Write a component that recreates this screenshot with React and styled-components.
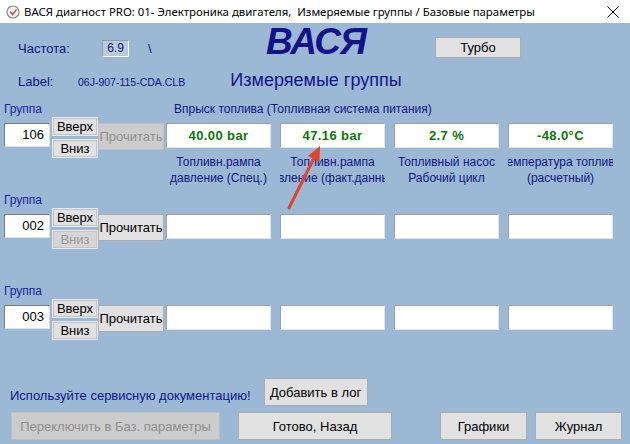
import React from "react";
import styled, { createGlobalStyle } from "styled-components";

const GlobalStyle = createGlobalStyle`
  html, body {
    margin: 0;
    padding: 0;
    overflow: hidden;
  }
  body {
    font-family: "Liberation Sans", Arial, sans-serif;
  }
`;

const Window = styled.div`
  position: relative;
  width: 630px;
  height: 444px;
  display: flex;
  flex-direction: column;
  background: #9bb8d5;
  overflow: hidden;
`;

const TitleBar = styled.div`
  flex: none;
  height: 23px;
  display: flex;
  align-items: center;
  padding-left: 6px;
  background: #fff;
  color: #000;
  font-family: "Noto Sans", "Open Sans", sans-serif;
  font-size: 11.4px;
  white-space: nowrap;
  .title-text {
    margin-left: 4px;
  }
  .close {
    margin-left: auto;
    margin-right: 11px;
    display: flex;
  }
`;

const Body = styled.div`
  flex: 1;
  display: flex;
  flex-direction: column;
  padding: 0 4px 4px 4px;
`;

const Header = styled.div`
  flex: none;
  height: 79px;
  display: flex;
  padding-top: 4px;
  box-sizing: border-box;
`;

const InfoCol = styled.div`
  width: 226px;
  padding-left: 14px;
  padding-top: 13px;
  box-sizing: border-box;
`;

const InfoRow = styled.div`
  display: flex;
  align-items: center;
  height: 17px;
  margin-top: ${(p) => p.$offset || 0}px;
  color: #141484;
  font-size: 13px;
  .key {
    width: ${(p) => p.$keyWidth}px;
  }
  .file {
    font-size: 10.5px;
  }
  .slash {
    margin-left: 19px;
  }
`;

const FreqBox = styled.div`
  width: 27px;
  height: 17px;
  box-sizing: border-box;
  border: 1px solid;
  border-color: #8d9db0 #fff #fff #8d9db0;
  background: #bccadb;
  color: #141484;
  font-size: 12px;
  line-height: 15px;
  text-align: center;
`;

const BrandCol = styled.div`
  width: 172px;
  text-align: center;
  color: #14128a;
  .brand {
    font-size: 37px;
    line-height: 30px;
    font-weight: 700;
    font-style: italic;
    letter-spacing: -1px;
  }
  .subtitle {
    margin-top: 13px;
    font-size: 18px;
    line-height: 20px;
    white-space: nowrap;
  }
`;

const WinButton = styled.button`
  flex: none;
  width: ${(p) => p.$w}px;
  height: ${(p) => p.$h || 28}px;
  margin-left: ${(p) => p.$ml || 0}px;
  margin-top: ${(p) => p.$mt || 0}px;
  padding: 0;
  box-sizing: border-box;
  border: 1px solid #adadad;
  background: #e1e1e1;
  color: #000;
  font-family: "Liberation Sans", Arial, sans-serif;
  font-size: 13px;
  white-space: nowrap;
  &:disabled {
    background: #cccccc;
    border-color: #bfbfbf;
    color: #8f8f8f;
  }
`;

const SmallButton = styled(WinButton)`
  border-color: #e6e9ee;
  box-shadow: inset 0 0 0 1px #c4c4c4;
  &:disabled {
    background: #d6d6d6;
    border-color: #e6e9ee;
    color: #9a9a9a;
  }
`;

const GroupBlock = styled.div`
  flex: none;
  height: 91px;
  display: flex;
  flex-direction: column;
`;

const HeadLine = styled.div`
  display: flex;
  height: 14px;
  font-size: 12px;
  line-height: 14px;
  white-space: nowrap;
  .group {
    width: 170px;
    color: #1c1ca6;
  }
  .section {
    color: #141484;
  }
`;

const MainRow = styled.div`
  display: flex;
  align-items: flex-start;
  margin-top: 1px;
`;

const GroupInput = styled.div`
  width: 46px;
  height: 24px;
  margin-top: 6px;
  box-sizing: border-box;
  border: 1px solid;
  border-color: #7a7a7a #e0e0e0 #e0e0e0 #7a7a7a;
  background: #fff;
  color: #000;
  font-size: 13px;
  line-height: 22px;
  text-align: right;
  padding-right: 5px;
`;

const UpDown = styled.div`
  display: flex;
  flex-direction: column;
  gap: 3px;
  margin-left: 2px;
`;

const ValueCells = styled.div`
  display: flex;
  gap: 9px;
  margin-left: 2px;
`;

const ValueCell = styled.div`
  width: 105px;
  display: flex;
  flex-direction: column;
`;

const ValueBox = styled.div`
  height: 25px;
  margin-top: 6px;
  box-sizing: border-box;
  border: 1px solid;
  border-color: #a0a0a0 #e4e4e4 #e4e4e4 #a0a0a0;
  background: #fff;
  color: #0b780b;
  font-size: 13px;
  font-weight: 700;
  letter-spacing: 0.4px;
  line-height: 23px;
  text-align: center;
`;

const Description = styled.div`
  margin-top: 6px;
  color: #141484;
  font-size: 12px;
  line-height: 16px;
  .line {
    display: flex;
    justify-content: center;
    overflow: hidden;
    white-space: nowrap;
  }
`;

const Bottom = styled.div`
  margin-top: auto;
  display: flex;
  flex-direction: column;
`;

const HintRow = styled.div`
  display: flex;
  align-items: flex-end;
  .hint {
    padding-left: 6px;
    margin-bottom: 3px;
    color: #141484;
    font-size: 13px;
    line-height: 15px;
    white-space: nowrap;
  }
`;

const ButtonRow = styled.div`
  display: flex;
  margin-top: 6px;
`;

const Arrow = styled.svg`
  position: absolute;
  left: 280px;
  top: 140px;
  pointer-events: none;
`;

const groups = [
  {
    num: "106",
    downDisabled: false,
    readDisabled: true,
    title: "Впрыск топлива (Топливная система питания)",
    values: [
      { v: "40.00 bar", d: ["Топливн.рампа", "давление (Спец.)"] },
      { v: "47.16 bar", d: ["Топливн.рампа", "давление (факт.данные)"] },
      { v: "2.7 %", d: ["Топливный насос", "Рабочий цикл"] },
      { v: "-48.0°C", d: ["Температура топлива", "(расчетный)"] },
    ],
  },
  { num: "002", downDisabled: true, readDisabled: false, values: [{}, {}, {}, {}] },
  { num: "003", downDisabled: false, readDisabled: false, values: [{}, {}, {}, {}] },
];

const AppIcon = () => (
  <svg width="14" height="14" viewBox="0 0 14 14">
    <circle cx="7" cy="7" r="6" fill="#f4f4f4" stroke="#8a8a8a" strokeWidth="1.2" />
    <path d="M4 6.5 L6.5 9.5 L10.5 4.5" fill="none" stroke="#d8542e" strokeWidth="1.6" />
  </svg>
);

const CloseIcon = () => (
  <svg width="12" height="12" viewBox="0 0 12 12">
    <path d="M0.5 0.5 L11.5 11.5 M11.5 0.5 L0.5 11.5" stroke="#000" strokeWidth="1" />
  </svg>
);

const App = () => {
  return (
    <>
      <GlobalStyle />
      <Window>
        <TitleBar>
          <AppIcon />
          <span className="title-text">
            ВАСЯ диагност PRO: 01- Электроника двигателя,&nbsp; Измеряемые группы / Базовые параметры
          </span>
          <span className="close">
            <CloseIcon />
          </span>
        </TitleBar>
        <Body>
          <Header>
            <InfoCol>
              <InfoRow $keyWidth={84}>
                <span className="key">Частота:</span>
                <FreqBox>6.9</FreqBox>
                <span className="slash">\</span>
              </InfoRow>
              <InfoRow $keyWidth={60} $offset={16}>
                <span className="key">Label:</span>
                <span className="file">06J-907-115-CDA.CLB</span>
              </InfoRow>
            </InfoCol>
            <BrandCol>
              <div className="brand">ВАСЯ</div>
              <div className="subtitle">Измеряемые группы</div>
            </BrandCol>
            <WinButton $w={86} $h={21} $ml={33} $mt={10}>
              Турбо
            </WinButton>
          </Header>

          {groups.map((g) => (
            <GroupBlock key={g.num}>
              <HeadLine>
                <span className="group">Группа</span>
                {g.title && <span className="section">{g.title}</span>}
              </HeadLine>
              <MainRow>
                <GroupInput>{g.num}</GroupInput>
                <UpDown>
                  <SmallButton $w={46} $h={19}>
                    Вверх
                  </SmallButton>
                  <SmallButton $w={46} $h={19} disabled={g.downDisabled}>
                    Вниз
                  </SmallButton>
                </UpDown>
                <WinButton $w={66} $h={27} $mt={6} disabled={g.readDisabled}>
                  Прочитать
                </WinButton>
                <ValueCells>
                  {g.values.map((val, i) => (
                    <ValueCell key={i}>
                      <ValueBox>{val.v}</ValueBox>
                      {val.d && (
                        <Description>
                          {val.d.map((line) => (
                            <div className="line" key={line}>
                              <span>{line}</span>
                            </div>
                          ))}
                        </Description>
                      )}
                    </ValueCell>
                  ))}
                </ValueCells>
              </MainRow>
            </GroupBlock>
          ))}

          <Bottom>
            <HintRow>
              <span className="hint">Используйте сервисную документацию!</span>
              <WinButton $w={104} $ml={13}>
                Добавить в лог
              </WinButton>
            </HintRow>
            <ButtonRow>
              <WinButton $w={209} $ml={7} disabled>
                Переключить в Баз. параметры
              </WinButton>
              <WinButton $w={154} $ml={18}>
                Готово, Назад
              </WinButton>
              <WinButton $w={87} $ml={48}>
                Графики
              </WinButton>
              <WinButton $w={87} $ml={8}>
                Журнал
              </WinButton>
            </ButtonRow>
          </Bottom>
        </Body>

        <Arrow width="50" height="75" viewBox="0 0 50 75">
          <line x1="9" y1="68" x2="34" y2="18" stroke="#e2452f" strokeWidth="3" strokeLinecap="round" />
          <polygon points="40,6 39.5,22 28,16" fill="#e2452f" />
        </Arrow>
      </Window>
    </>
  );
};

export default App;
